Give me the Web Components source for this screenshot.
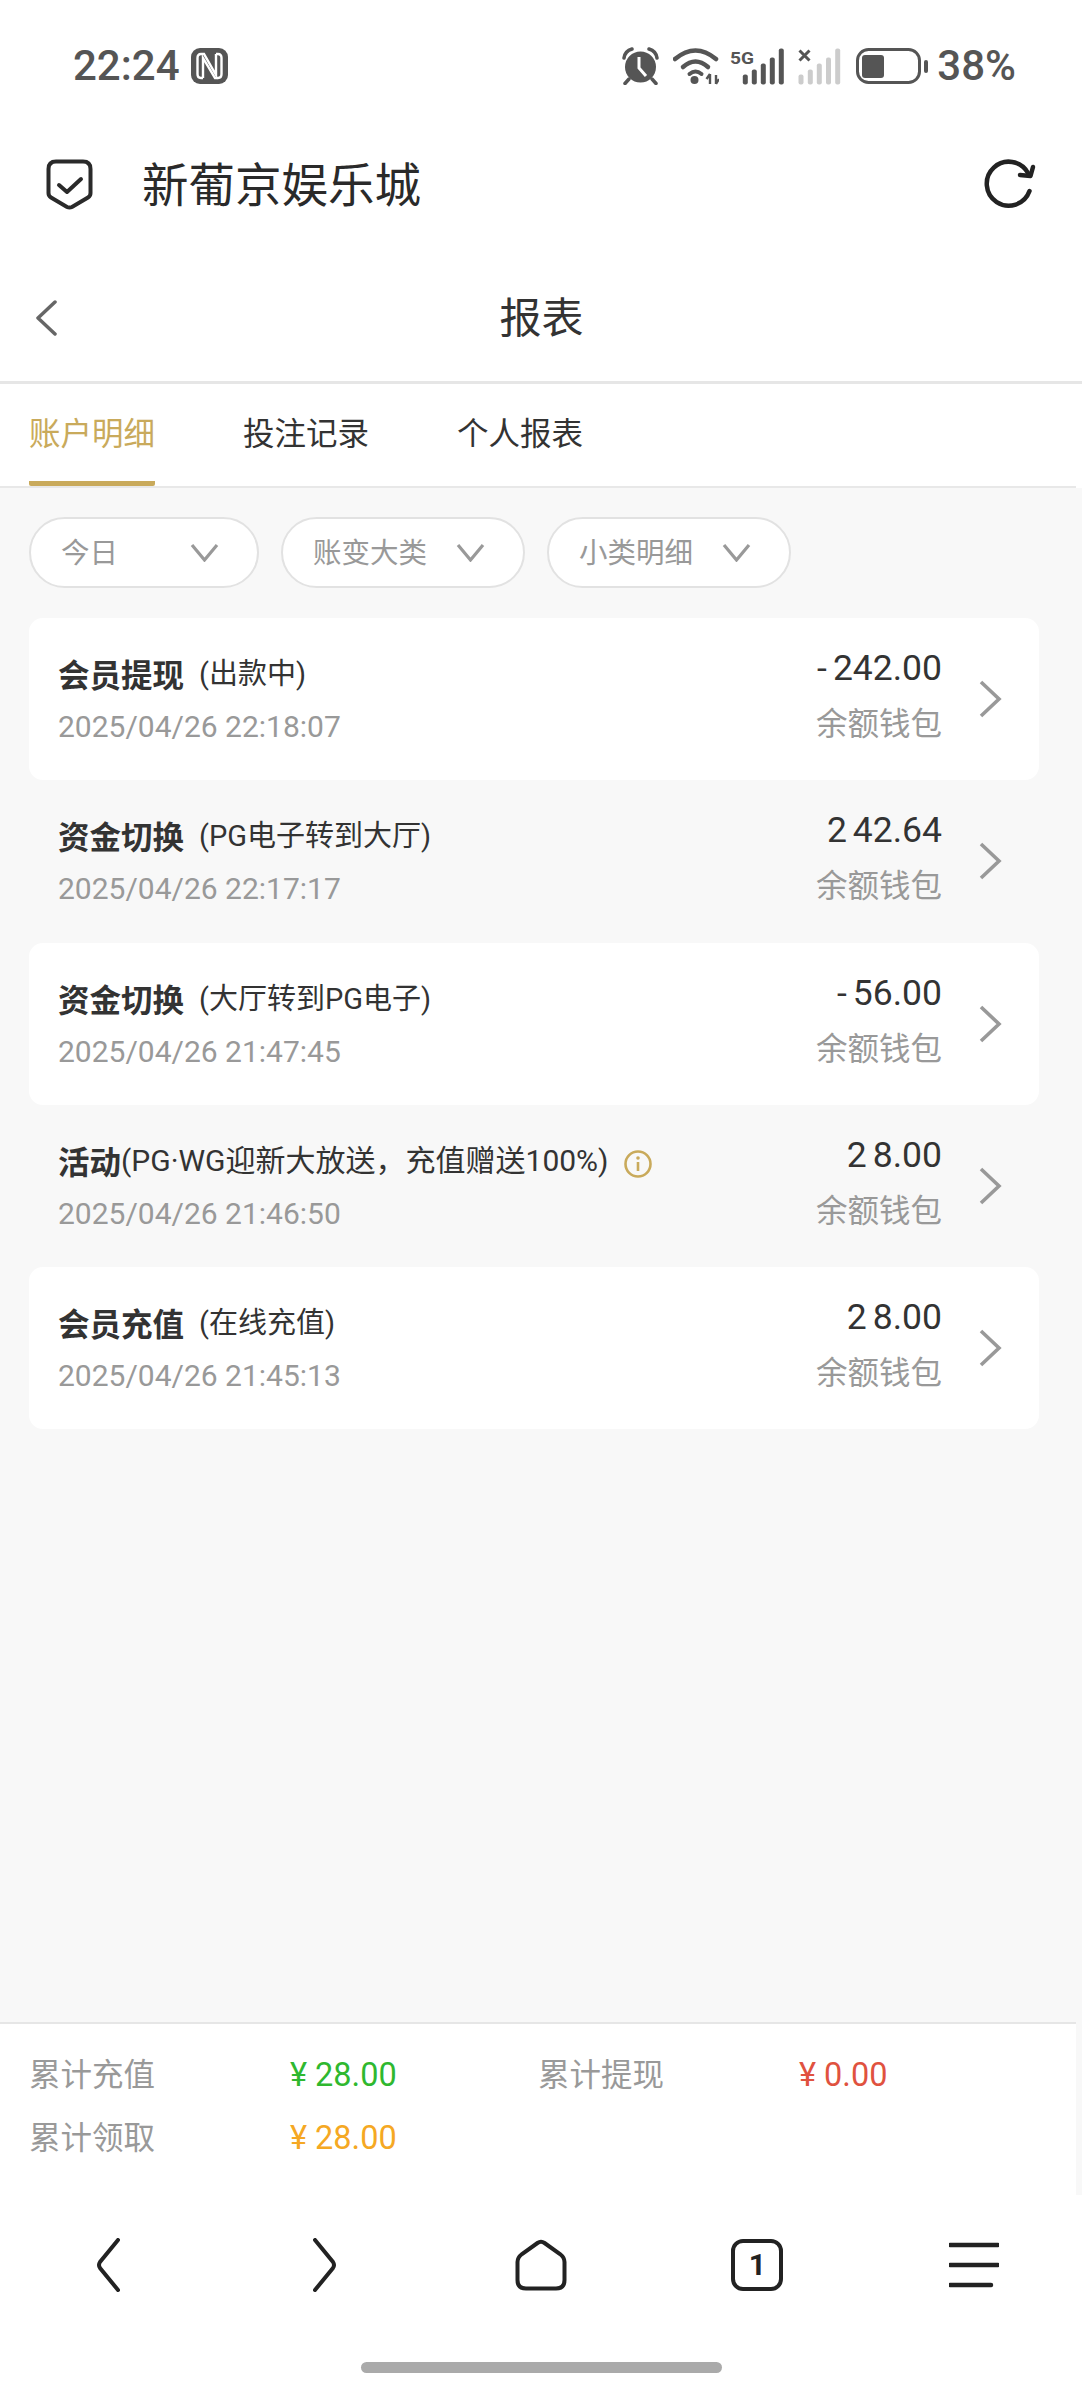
<!DOCTYPE html>
<html lang="zh-CN">
<head>
<meta charset="utf-8">
<title>报表</title>
<style>
  html, body { margin: 0; padding: 0; background: #f8f8f8; }
  body { font-family: Roboto, "Noto Sans CJK SC", sans-serif; }
</style>
</head>
<body>
<report-app>
  <status-bar></status-bar>
  <browser-bar>新葡京娱乐城</browser-bar>
  <page-header>报表</page-header>
  <tab-strip>
    <tab-item active>账户明细</tab-item>
    <tab-item>投注记录</tab-item>
    <tab-item>个人报表</tab-item>
  </tab-strip>
  <record-list slot="main">
    <filter-pill slot="filters" style="--pill-width:230px">今日</filter-pill>
    <filter-pill slot="filters" style="--pill-width:244px">账变大类</filter-pill>
    <filter-pill slot="filters" style="--pill-width:244px">小类明细</filter-pill>

    <record-row white amount="-242.00" time="2025/04/26 22:18:07" heading="会员提现">(出款中)</record-row>
    <record-row amount="242.64" time="2025/04/26 22:17:17" heading="资金切换">(PG电子转到大厅)</record-row>
    <record-row white amount="-56.00" time="2025/04/26 21:47:45" heading="资金切换">(大厅转到PG电子)</record-row>
    <record-row tight info amount="28.00" time="2025/04/26 21:46:50" heading="活动">(PG·WG迎新大放送，充值赠送100%)</record-row>
    <record-row white amount="28.00" time="2025/04/26 21:45:13" heading="会员充值">(在线充值)</record-row>
  </record-list>
  <totals-panel slot="footer">
    <total-item label="累计充值" value="28.00" color="#2fb82f"></total-item>
    <total-item label="累计提现" value="0.00" color="#e0523f"></total-item>
    <total-item label="累计领取" value="28.00" color="#f5a823"></total-item>
  </totals-panel>
  <nav-bar slot="footer"></nav-bar>
</report-app>

<script>
// Page frame: fixed phone height, list area takes whatever is left
class ReportApp extends HTMLElement {
  constructor() {
    super();
    this.attachShadow({ mode: 'open' });
    this.shadowRoot.innerHTML = `
      <style>
        :host { display: flex; flex-direction: column; height: 2400px; overflow: hidden; background: #f8f8f8; color: #333; }
        .top { background: #fff; }
        .main { flex: 1; min-height: 0; }
        ::slotted(tab-strip) { margin-right: 6px; }
      </style>
      <div class="top"><slot></slot></div>
      <div class="main"><slot name="main"></slot></div>
      <slot name="footer"></slot>
    `;
  }
}

// Phone status bar
class StatusBar extends HTMLElement {
  constructor() {
    super();
    this.attachShadow({ mode: 'open' });
    this.shadowRoot.innerHTML = `
      <style>
        :host { display: flex; align-items: center; height: 132px; padding: 0 66px 0 73px; box-sizing: border-box; color: #555; font: 500 42px/48px Roboto, sans-serif; }
        svg { display: block; flex: none; }
        .nfc { margin-left: 11px; }
        .right { margin-left: auto; display: flex; align-items: center; }
        .alarm { margin-right: 14px; }
        .wifi { margin-right: 11px; }
        .sig5g { margin-right: 13px; }
        .sigx { margin-right: 15px; }
        .pct { margin-left: 9px; }
      </style>
      <span class="time">22:24</span>
      <svg class="nfc" width="37" height="36" viewBox="0 0 37 36">
        <rect width="37" height="36" rx="9" fill="#555"/>
        <path d="M12 30 H10 Q6.500 30 6.500 26 V10 Q6.500 6 10 6 H13 L25 27 V6" fill="none" stroke="#fff" stroke-width="2.400"/>
        <path d="M12 30 V10 L24 30 H27 Q30.500 30 30.500 26 V10 Q30.500 6 27 6 H25" fill="none" stroke="#fff" stroke-width="2.400"/>
      </svg>
      <div class="right">
        <svg class="alarm" width="37" height="38" viewBox="0 0 37 38">
          <circle cx="18.500" cy="20" r="15.500" fill="#555"/>
          <path d="M2 11 Q3 4 10 2 M35 11 Q34 4 27 2" fill="none" stroke="#555" stroke-width="3.500" stroke-linecap="round"/>
          <path d="M7 32 L3 36.500 M30 32 L34 36.500" stroke="#555" stroke-width="3.500" stroke-linecap="round"/>
          <path d="M17 10 V21 L24 29" fill="none" stroke="#fff" stroke-width="3"/>
        </svg>
        <svg class="wifi" width="46" height="37" viewBox="0 0 46 37">
          <path d="M2 11 Q22.500 -6 43 11" fill="none" stroke="#555" stroke-width="4.500" stroke-linecap="round"/>
          <path d="M10 19 Q22.500 8 35 19" fill="none" stroke="#555" stroke-width="4.500" stroke-linecap="round"/>
          <path d="M16.500 26 Q22.500 21 28.500 26" fill="none" stroke="#555" stroke-width="4" stroke-linecap="round"/>
          <circle cx="21.500" cy="32" r="4" fill="#555"/>
          <path d="M37 26 V36 M33.500 31 L37 26 M43 27 V36 M43 36 L46 31" fill="none" stroke="#555" stroke-width="2.400"/>
        </svg>
        <svg class="sig5g" width="55" height="37" viewBox="0 0 55 37">
          <text x="0" y="16" font-family="Roboto, sans-serif" font-size="17" font-weight="700" fill="#555" textLength="24" lengthAdjust="spacingAndGlyphs">5G</text>
          <g fill="#555">
            <rect x="12.800" y="26.500" width="5" height="10" rx="2"/>
            <rect x="21.800" y="21.500" width="5" height="15" rx="2"/>
            <rect x="30.800" y="15.500" width="5" height="21" rx="2"/>
            <rect x="39.800" y="9.500" width="5" height="27" rx="2"/>
            <rect x="48.800" y="0.500" width="5" height="36" rx="2"/>
          </g>
        </svg>
        <svg class="sigx" width="43" height="37" viewBox="0 0 43 37">
          <path d="M1.500 2.500 L11.500 12.500 M11.500 2.500 L1.500 12.500" stroke="#555" stroke-width="3"/>
          <g fill="#ccc">
            <rect x="0.500" y="26.500" width="5" height="10" rx="2"/>
            <rect x="9.800" y="21.500" width="5" height="15" rx="2"/>
            <rect x="18.800" y="15.500" width="5" height="21" rx="2"/>
            <rect x="28" y="9.500" width="5" height="27" rx="2"/>
            <rect x="37.200" y="0.500" width="5" height="36" rx="2"/>
          </g>
        </svg>
        <svg width="72" height="36" viewBox="0 0 72 36">
          <rect x="1.500" y="1.500" width="62" height="33" rx="11" fill="none" stroke="#555" stroke-width="3"/>
          <rect x="6" y="7" width="22" height="23" rx="3" fill="#555"/>
          <rect x="68" y="12" width="4" height="13" rx="2" fill="#555"/>
        </svg>
        <span class="pct">38%</span>
      </div>
    `;
  }
}

// Browser title row with shield and reload
class BrowserBar extends HTMLElement {
  constructor() {
    super();
    this.attachShadow({ mode: 'open' });
    this.shadowRoot.innerHTML = `
      <style>
        :host { display: flex; align-items: center; height: 104px; padding: 0 44px 0 46px; box-sizing: border-box; color: #2a2a2a; font: 46.500px/60px "Noto Sans CJK SC", sans-serif; }
        svg { display: block; flex: none; }
        .title { margin: 0 0 5px 49px; flex: 1; }
      </style>
      <svg width="47" height="51" viewBox="0 0 47 51">
        <path d="M10 2.500 H37 Q44.500 2.500 44.500 10 V34 Q44.500 37 42 38.500 L26 48 Q23.500 49.200 21 48 L5 38.500 Q2.500 37 2.500 34 V10 Q2.500 2.500 10 2.500 Z" fill="none" stroke="#2a2a2a" stroke-width="4"/>
        <path d="M13 26 L21 33 L35 20" fill="none" stroke="#2a2a2a" stroke-width="4" stroke-linecap="round" stroke-linejoin="round"/>
      </svg>
      <span class="title"><slot></slot></span>
      <svg width="60" height="60" viewBox="0 0 60 60" style="margin-right:-1px">
        <path d="M50.500 37 A22 22 0 1 1 49 19" fill="none" stroke="#222" stroke-width="4.500" stroke-linecap="round"/>
        <path d="M54 13 L51.500 22 L41 21" fill="none" stroke="#222" stroke-width="4.500" stroke-linecap="round" stroke-linejoin="round"/>
      </svg>
    `;
  }
}

// Centered page title with back arrow
class PageHeader extends HTMLElement {
  constructor() {
    super();
    this.attachShadow({ mode: 'open' });
    this.shadowRoot.innerHTML = `
      <style>
        :host { display: grid; grid-template-columns: 1fr auto 1fr; align-items: center; height: 148px; padding: 18px 0 0 35px; box-sizing: border-box; border-bottom: 3px solid #e6e6e6; background: #fff; color: #333; font: 42px/56px "Noto Sans CJK SC", sans-serif; }
        svg { display: block; }
        .title { margin: 0 0 5px -34px; }
      </style>
      <svg width="22" height="36" viewBox="0 0 22 36">
        <path d="M20 2 L3 18 L20 34" fill="none" stroke="#666" stroke-width="3.500" stroke-linecap="round" stroke-linejoin="round"/>
      </svg>
      <span class="title"><slot></slot></span>
    `;
  }
}

// Tabs under the header
class TabStrip extends HTMLElement {
  constructor() {
    super();
    this.attachShadow({ mode: 'open' });
    this.shadowRoot.innerHTML = `
      <style>
        :host { display: flex; gap: 88px; padding-left: 29px; border-bottom: 2px solid #e8e8e8; background: #fff; }
      </style>
      <slot></slot>
    `;
  }
}

class TabItem extends HTMLElement {
  constructor() {
    super();
    this.attachShadow({ mode: 'open' });
    this.shadowRoot.innerHTML = `
      <style>
        :host { display: block; height: 102px; box-sizing: border-box; border-bottom: 5px solid transparent; border-radius: 0 0 2px 2px; color: #333; font: 31.500px/94px "Noto Sans CJK SC", sans-serif; }
        :host([active]) { color: #c9aa5b; border-bottom-color: #c9aa5b; }
      </style>
      <slot></slot>
    `;
  }
}

// Rounded dropdown in the filter row
class FilterPill extends HTMLElement {
  constructor() {
    super();
    this.attachShadow({ mode: 'open' });
    this.shadowRoot.innerHTML = `
      <style>
        :host { display: flex; align-items: center; justify-content: space-between; width: var(--pill-width); height: 71px; padding: 0 38px 0 30px; box-sizing: border-box; border: 2px solid #e2e2e2; border-radius: 36px; background: #fff; color: #999; font: 28.500px/40px "Noto Sans CJK SC", sans-serif; }
        svg { display: block; flex: none; }
        span { margin-bottom: 3px; }
      </style>
      <span><slot></slot></span>
      <svg width="29" height="19" viewBox="0 0 29 19">
        <path d="M2 2 L14.500 17 L27 2" fill="none" stroke="#999" stroke-width="3.200"/>
      </svg>
    `;
  }
}

// Filter row plus the list of records
class RecordList extends HTMLElement {
  constructor() {
    super();
    this.attachShadow({ mode: 'open' });
    this.shadowRoot.innerHTML = `
      <style>
        :host { display: block; padding: 29px 0 0; }
        .filters { display: flex; gap: 22px; padding-left: 29px; }
        .rows { display: flex; flex-direction: column; margin: 30px 43px 0 28.500px; }
      </style>
      <div class="filters"><slot name="filters"></slot></div>
      <div class="rows"><slot></slot></div>
    `;
  }
}

// One account record, white attribute gives the striped card
class RecordRow extends HTMLElement {
  constructor() {
    super();
    this.attachShadow({ mode: 'open' });
    const info = this.hasAttribute('info') ? `
      <svg class="info" width="30" height="30" viewBox="0 0 30 30">
        <circle cx="15" cy="15" r="12.500" fill="none" stroke="#c9aa5b" stroke-width="2.600"/>
        <circle cx="15" cy="9" r="1.800" fill="#c9aa5b"/>
        <path d="M15 13 V22" stroke="#c9aa5b" stroke-width="2.600"/>
      </svg>` : '';
    this.shadowRoot.innerHTML = `
      <style>
        :host { display: flex; align-items: center; height: 162.250px; padding: 0 37px 0 29.500px; box-sizing: border-box; border-radius: 14px; }
        :host([white]) { background: #fff; }
        .left { flex: 1; padding-top: 5px; }
        .head { display: flex; align-items: center; height: 40px; color: #333; }
        b { font: 700 31.500px/40px "Noto Sans CJK SC", sans-serif; color: #333; margin-top: -6px; }
        .note { margin-left: 15px; font: 29px/40px Roboto, "Noto Sans CJK SC", sans-serif; margin-top: -4px; }
        :host([tight]) .note { margin-left: 0; font-size: 30px; }
        .info { margin: 0 0 -2px 14px; flex: none; display: block; }
        .time { margin-top: 11px; font: 30px/40px Roboto, sans-serif; color: #999; }
        .right { text-align: right; padding-bottom: 9px; }
        .amount { font: 35.500px/40px Roboto, sans-serif; color: #333; }
        .amount::first-letter { letter-spacing: 6px; }
        .wallet { margin-top: 13px; font: 31.500px/40px "Noto Sans CJK SC", sans-serif; color: #999; }
        .more { display: block; flex: none; margin-left: 37px; }
      </style>
      <div class="left">
        <div class="head"><b>${this.getAttribute('heading')}</b><span class="note"><slot></slot></span>${info}</div>
        <div class="time">${this.getAttribute('time')}</div>
      </div>
      <div class="right">
        <div class="amount">${this.getAttribute('amount')}</div>
        <div class="wallet">余额钱包</div>
      </div>
      <svg class="more" width="23" height="38" viewBox="0 0 23 38">
        <path d="M2 2 L20 19 L2 36" fill="none" stroke="#999" stroke-width="3.600"/>
      </svg>
    `;
  }
}

// Totals block above the bottom nav
class TotalsPanel extends HTMLElement {
  constructor() {
    super();
    this.attachShadow({ mode: 'open' });
    this.shadowRoot.innerHTML = `
      <style>
        :host { display: grid; grid-template-columns: 509px 1fr; row-gap: 23px; align-content: start; height: 173px; margin-right: 6px; padding: 31px 0 0 29px; box-sizing: border-box; border-top: 2px solid #e6e6e6; background: #fff; }
      </style>
      <slot></slot>
    `;
  }
}

class TotalItem extends HTMLElement {
  constructor() {
    super();
    this.attachShadow({ mode: 'open' });
    this.shadowRoot.innerHTML = `
      <style>
        :host { display: grid; grid-template-columns: 261px 1fr; height: 40px; font: 31.500px/40px "Noto Sans CJK SC", sans-serif; color: #999; }
        .label { margin-top: -3px; }
        .value { font: 32.500px/40px Roboto, sans-serif; color: ${this.getAttribute('color')}; }
        .yen { margin-right: 8px; }
      </style>
      <span class="label">${this.getAttribute('label')}</span>
      <span class="value"><span class="yen">¥</span>${this.getAttribute('value')}</span>
    `;
  }
}

// Browser toolbar and the gesture pill under it
class NavBar extends HTMLElement {
  constructor() {
    super();
    this.attachShadow({ mode: 'open' });
    this.shadowRoot.innerHTML = `
      <style>
        :host { display: block; height: 205px; background: #fff; }
        .icons { display: grid; grid-template-columns: repeat(5, 1fr); height: 140px; justify-items: center; align-items: center; }
        svg { display: block; }
        .tab { position: relative; width: 52px; height: 52px; }
        .tab span { position: absolute; inset: 0; text-align: center; font: 700 30px/52px Roboto, sans-serif; color: #222; }
        .pill { width: 361px; height: 11px; margin: 27px auto 0; border-radius: 6px; background: #aaa; }
      </style>
      <div class="icons">
        <svg width="24" height="54" viewBox="0 0 24 54">
          <path d="M22 2 L4 24 Q2 27 4 30 L22 52" fill="none" stroke="#222" stroke-width="4" stroke-linecap="round"/>
        </svg>
        <svg width="24" height="54" viewBox="0 0 24 54">
          <path d="M2 2 L20 24 Q22 27 20 30 L2 52" fill="none" stroke="#222" stroke-width="4" stroke-linecap="round"/>
        </svg>
        <svg width="52" height="52" viewBox="0 0 52 52">
          <path d="M22.500 4 Q26 1.500 29.500 4 L45 15 Q49.500 18.500 49.500 23 V41 Q49.500 49.500 41 49.500 H11 Q2.500 49.500 2.500 41 V23 Q2.500 18.500 7 15 Z" fill="none" stroke="#222" stroke-width="4"/>
        </svg>
        <div class="tab">
          <svg width="52" height="52" viewBox="0 0 52 52">
            <rect x="2" y="2" width="48" height="48" rx="10" fill="none" stroke="#222" stroke-width="4"/>
          </svg>
          <span>1</span>
        </div>
        <svg width="50" height="46" viewBox="0 0 50 46">
          <path d="M1 3 H49 M1 23 H49 M1 43 H42" stroke="#222" stroke-width="4.500" stroke-linecap="round"/>
        </svg>
      </div>
      <div class="pill"></div>
    `;
  }
}

customElements.define('report-app', ReportApp);
customElements.define('status-bar', StatusBar);
customElements.define('browser-bar', BrowserBar);
customElements.define('page-header', PageHeader);
customElements.define('tab-strip', TabStrip);
customElements.define('tab-item', TabItem);
customElements.define('filter-pill', FilterPill);
customElements.define('record-list', RecordList);
customElements.define('record-row', RecordRow);
customElements.define('totals-panel', TotalsPanel);
customElements.define('total-item', TotalItem);
customElements.define('nav-bar', NavBar);
</script>
</body>
</html>
